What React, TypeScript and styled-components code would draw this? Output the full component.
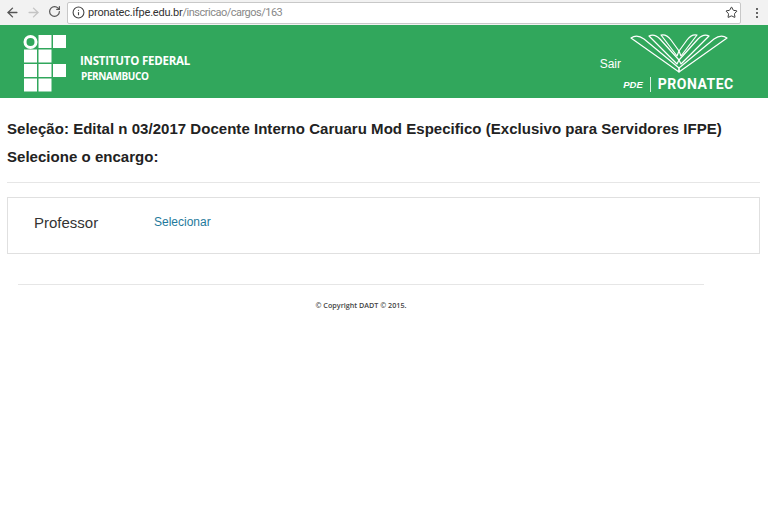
import React from "react";
import styled, { createGlobalStyle } from "styled-components";
import { ArrowLeft, ArrowRight, RotateCw, Info, Star } from "lucide-react";

const GlobalStyle = createGlobalStyle`
  html, body {
    margin: 0;
    padding: 0;
    background: #fff;
    font-family: "Liberation Sans", Arial, sans-serif;
  }
`;

const Toolbar = styled.div`
  height: 25px;
  box-sizing: border-box;
  background: #f2f2f2;
  display: flex;
  align-items: center;
`;

const NavButton = styled.div<{ $dim?: boolean }>`
  width: 21px;
  display: flex;
  justify-content: center;
  color: ${(p) => (p.$dim ? "#c4c4c4" : "#555")};
`;

const NavGroup = styled.div`
  display: flex;
  width: 67px;
  padding-left: 2px;
  box-sizing: border-box;
`;

const AddressBar = styled.div`
  width: 674px;
  height: 22px;
  box-sizing: border-box;
  background: #fff;
  border: 1px solid #c8c8c8;
  border-radius: 2px;
  display: flex;
  align-items: center;
  padding: 0 2px 0 4px;
  font-family: "Roboto", sans-serif;
  font-size: 11px;
`;

const Host = styled.span`
  margin-left: 3px;
  color: #333;
  letter-spacing: -0.2px;
`;

const UrlPath = styled.span`
  color: #888;
  flex: 1;
  letter-spacing: -0.5px;
`;

const MenuDots = styled.div`
  flex: 1;
  display: flex;
  flex-direction: column;
  align-items: center;
  gap: 2px;
  padding-left: 5px;
  span {
    width: 2px;
    height: 2px;
    background: #666;
  }
`;

const Header = styled.header`
  height: 73px;
  background: #31a75c;
  display: flex;
  justify-content: space-between;
  color: #fff;
`;

const Brand = styled.div`
  display: flex;
  padding: 9px 0 0 23px;
`;

const BrandText = styled.div`
  margin: 19px 0 0 13px;
  font-family: "Open Sans", sans-serif;
  font-weight: 700;
  font-size: 11.5px;
  line-height: 15px;
  letter-spacing: -0.22px;
`;

const BrandSecond = styled.div`
  font-size: 10px;
  letter-spacing: -0.4px;
  margin: 1px 0 0 1px;
`;

const HeaderRight = styled.div`
  display: flex;
  padding-right: 33px;
`;

const Logout = styled.a`
  font-size: 12px;
  margin: 32px 1px 0 0;
  color: #fff;
`;

const PronatecLogo = styled.div`
  width: 113px;
  display: flex;
  flex-direction: column;
  align-items: center;
  padding-top: 9px;
`;

const PronatecRow = styled.div`
  display: flex;
  align-items: center;
  font-weight: 700;
  margin-top: 3px;
  line-height: 15px;
`;

const Pde = styled.span`
  font-size: 9.5px;
  font-style: italic;
`;

const Sep = styled.span`
  width: 1px;
  height: 15px;
  background: #d5efdf;
  margin: 0 7px;
`;

const PronatecName = styled.span`
  font-family: "Roboto", sans-serif;
  font-size: 14px;
  letter-spacing: 0.5px;
`;

const Main = styled.main`
  padding: 21px 8px 0 7px;
`;

const Title = styled.h4`
  margin: 0 0 8px;
  font-size: 15px;
  line-height: 20px;
  font-weight: 700;
  color: #222;
  letter-spacing: 0.03px;
`;

const Rule = styled.hr`
  border: 0;
  border-top: 1px solid #e6e6e6;
  margin: 15px 0 14px;
`;

const Card = styled.div`
  height: 57px;
  box-sizing: border-box;
  border: 1px solid #e0e0e0;
  display: flex;
  padding: 15px 0 0 26px;
`;

const Role = styled.span`
  width: 120px;
  font-size: 15px;
  line-height: 20px;
  color: #333;
`;

const SelectLink = styled.a`
  font-size: 12px;
  line-height: 18px;
  color: #1f7a9c;
`;

const Footer = styled.footer`
  width: 686px;
  margin: 30px 0 0 18px;
  border-top: 1px solid #e6e6e6;
  padding-top: 15px;
  text-align: center;
  font-family: "Open Sans", sans-serif;
  font-weight: 600;
  font-size: 7.2px;
  line-height: 10px;
  color: #444;
`;

const ifSquares = [
  [1, 0], [2, 0],
  [0, 1], [1, 1],
  [0, 2], [1, 2], [2, 2],
  [0, 3], [1, 3],
];

const IfLogo = () => (
  <svg width="44" height="60" viewBox="0 0 44 60" aria-hidden="true">
    <circle cx="7.5" cy="8" r="5.5" fill="none" stroke="#fff" strokeWidth="3" />
    {ifSquares.map(([c, r]) => (
      <rect key={`${c}-${r}`} x={1 + c * 14.5} y={1 + r * 14.5} width="13" height="13" fill="#fff" />
    ))}
  </svg>
);

const leaves = [
  "M1 4 C5 1 10 2 14 5 L49 34 L49 38 Z",
  "M19 2 C23 0 27 2 30 5 L49 26 L47 30 Z",
  "M31 1 C35 0 38 2 41 6 L49 17 L47 22 Z",
];

const BookLogo = () => (
  <svg width="98" height="40" viewBox="0 0 98 40" fill="none" stroke="#fff" strokeWidth="1.2" strokeLinejoin="round" aria-hidden="true">
    {leaves.map((d) => (
      <React.Fragment key={d}>
        <path d={d} />
        <path d={d} transform="matrix(-1 0 0 1 98 0)" />
      </React.Fragment>
    ))}
  </svg>
);

export default function App() {
  return (
    <>
      <GlobalStyle />
      <Toolbar>
        <NavGroup>
          <NavButton><ArrowLeft size={15} strokeWidth={2.2} /></NavButton>
          <NavButton $dim><ArrowRight size={15} strokeWidth={2.2} /></NavButton>
          <NavButton><RotateCw size={13} strokeWidth={2.2} /></NavButton>
        </NavGroup>
        <AddressBar>
          <Info size={13} color="#444" />
          <Host>pronatec.ifpe.edu.br</Host>
          <UrlPath>/inscricao/cargos/163</UrlPath>
          <Star size={13} color="#333" strokeWidth={1.8} />
        </AddressBar>
        <MenuDots><span /><span /><span /></MenuDots>
      </Toolbar>
      <Header>
        <Brand>
          <IfLogo />
          <BrandText>
            <div>INSTITUTO FEDERAL</div>
            <BrandSecond>PERNAMBUCO</BrandSecond>
          </BrandText>
        </Brand>
        <HeaderRight>
          <Logout>Sair</Logout>
          <PronatecLogo>
            <BookLogo />
            <PronatecRow>
              <Pde>PDE</Pde>
              <Sep />
              <PronatecName>PRONATEC</PronatecName>
            </PronatecRow>
          </PronatecLogo>
        </HeaderRight>
      </Header>
      <Main>
        <Title>Seleção: Edital n 03/2017 Docente Interno Caruaru Mod Especifico (Exclusivo para Servidores IFPE)</Title>
        <Title>Selecione o encargo:</Title>
        <Rule />
        <Card>
          <Role>Professor</Role>
          <SelectLink>Selecionar</SelectLink>
        </Card>
      </Main>
      <Footer>© Copyright DADT © 2015.</Footer>
    </>
  );
}
